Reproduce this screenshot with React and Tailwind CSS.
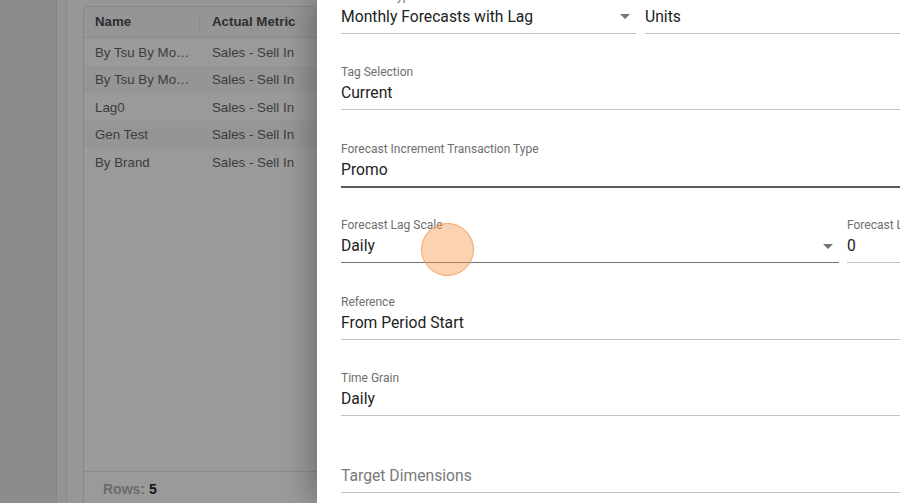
import React from "react";

const rows = [
  { name: "By Tsu By Month", metric: "Sales - Sell In", alt: false },
  { name: "By Tsu By Month", metric: "Sales - Sell In", alt: true },
  { name: "Lag0", metric: "Sales - Sell In", alt: false },
  { name: "Gen Test", metric: "Sales - Sell In", alt: true },
  { name: "By Brand", metric: "Sales - Sell In", alt: false },
];

function Arrow() {
  return (
    <svg width="10" height="5" viewBox="0 0 10 5" className="shrink-0">
      <path d="M0 0 L10 0 L5 5 Z" fill="#757575" />
    </svg>
  );
}

function Field({ label, value, placeholder, line = "light", select = false, className = "" }) {
  const lineCls =
    line === "dark"
      ? "border-b-2 border-[#5a5a5a]"
      : line === "mid"
      ? "border-b border-[#6f6f6f]"
      : "border-b border-[#c2c2c2]";
  return (
    <div className={"flex flex-col h-[76.5px] shrink-0 " + className}>
      <div className="h-4 text-[12px] leading-4 text-[#6e6e6e] whitespace-nowrap overflow-hidden">{label}</div>
      <div className={"mt-px flex items-center pb-1 " + lineCls}>
        <div
          className={
            "flex-1 h-6 text-[15.7px] leading-6 whitespace-nowrap overflow-hidden " +
            (placeholder ? "text-[#7a7a7a]" : "text-[#222]")
          }
        >
          {placeholder || value}
        </div>
        {select && (
          <div className="pr-[6px] pl-2 flex items-center">
            <Arrow />
          </div>
        )}
      </div>
    </div>
  );
}

export default function App() {
  return (
    <div
      className="relative w-[900px] h-[503px] overflow-hidden bg-[#8b8c8d]"
      style={{ fontFamily: "Roboto, 'Liberation Sans', sans-serif" }}
    >
      {/* background app (dimmed) */}
      <div className="flex h-full" style={{ fontFamily: "'Liberation Sans', Arial, sans-serif" }}>
        <div className="w-[57px] shrink-0 bg-[#8b8c8d] border-r border-[#858585]" />
        <div className="w-[10px] shrink-0 bg-[#939393] border-r border-[#8a8a8a]" />
        <div className="flex-1 bg-[#979797] pl-[16px] pt-[6px]">
          <div className="w-[700px] h-[520px] rounded-[4px] border border-[#888888] bg-[#9a9a9a] flex flex-col">
            <div className="h-[31px] shrink-0 flex items-center bg-[#959595] border-b border-[#8c8c8c] text-[13.3px] font-bold text-[#2e2e2e]">
              <div className="w-[116px] pl-[11px] flex items-center justify-between">
                <span>Name</span>
                <span className="w-px h-[16px] bg-[#8a8a8a]" />
              </div>
              <div className="pl-[12px]">Actual Metric</div>
            </div>
            {rows.map((r, i) => (
              <div
                key={i}
                className={
                  "h-[27.5px] shrink-0 flex items-center pt-[2px] text-[13.3px] text-[#3c3c3c] " +
                  (r.alt ? "bg-[#959595]" : "bg-[#9a9a9a]")
                }
              >
                <div className="w-[116px] pl-[11px] pr-[10px] truncate">{r.name}</div>
                <div className="pl-[12px]">{r.metric}</div>
              </div>
            ))}
            <div className="flex-1" />
            <div className="h-[54px] shrink-0 border-t border-[#8a8a8a] pl-[19px] pt-[9px] text-[14px] leading-4 font-bold">
              <span className="text-[#6b6b6b]">Rows: </span>
              <span className="text-[#151515]">5</span>
            </div>
          </div>
        </div>
      </div>

      {/* drawer */}
      <div className="absolute top-0 left-[317px] w-[700px] h-full bg-white shadow-[-10px_0_22px_rgba(0,0,0,0.22)] overflow-hidden">
        <div className="flex flex-col pl-[24px] w-[700px] mt-[-12.5px]">
          <div className="flex gap-[9px]">
            <Field className="w-[295px]" label="Forecast Type" value="Monthly Forecasts with Lag" select />
            <Field className="flex-1" label="Unit of Measure" value="Units" />
          </div>
          <Field label="Tag Selection" value="Current" />
          <Field label="Forecast Increment Transaction Type" value="Promo" line="dark" />
          <div className="flex gap-[8px]">
            <Field className="w-[498px]" label="Forecast Lag Scale" value="Daily" select line="mid" />
            <Field className="flex-1" label="Forecast Lag" value="0" />
          </div>
          <Field label="Reference" value="From Period Start" />
          <Field label="Time Grain" value="Daily" />
          <Field label="" placeholder="Target Dimensions" />
        </div>
      </div>

      {/* click indicator */}
      <div className="absolute left-[421px] top-[223px] w-[53px] h-[53px] rounded-full bg-[rgba(248,150,70,0.42)] border border-[#f3a263]" />
    </div>
  );
}
